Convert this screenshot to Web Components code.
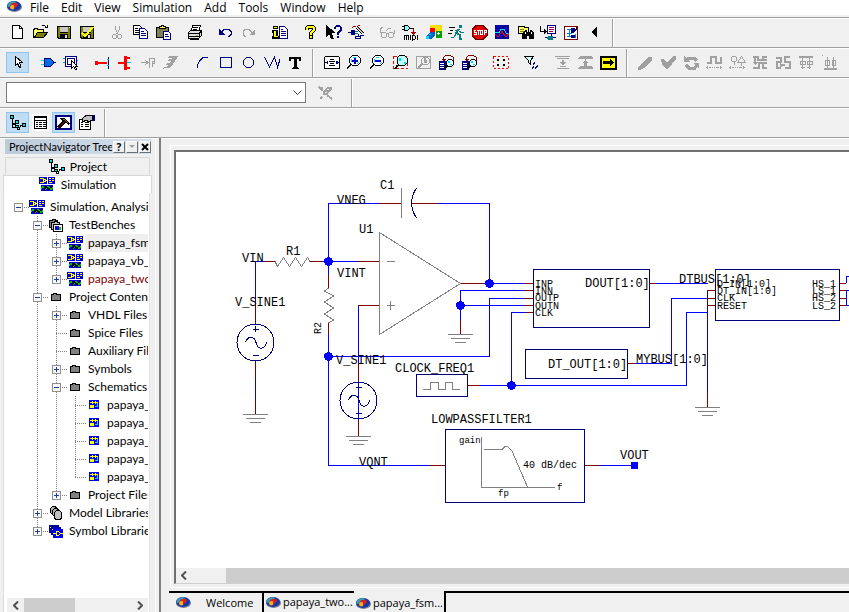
<!DOCTYPE html>
<html lang="en">
<head>
<meta charset="utf-8">
<title>Schematic editor</title>
<style>
  html, body { margin: 0; height: 100%; }
  body { font: 12px/16px Lato, "Open Sans", sans-serif; color: #000; background: #f0f0f0; overflow: hidden;
    --face: #f0f0f0; --shade: #a0a0a0; --light: #fff; --hot: #bfdcf3; --hot-edge: #8fc6f0; }
</style>
</head>
<body>
<app-shell>
  <menu-bar slot="menu">
    <app-icon name="logo"></app-icon>
    <menu-item>File</menu-item><menu-item>Edit</menu-item><menu-item>View</menu-item><menu-item>Simulation</menu-item><menu-item>Add</menu-item><menu-item>Tools</menu-item><menu-item>Window</menu-item><menu-item>Help</menu-item>
  </menu-bar>

  <tool-row slot="tools">
    <tool-bar>
      <tool-button icon="new" label="New"></tool-button><tool-button icon="open" label="Open"></tool-button><tool-button icon="save" label="Save"></tool-button><tool-button icon="savecheck" label="Save and check"></tool-button>
      <tool-gap></tool-gap>
      <tool-button icon="cut" label="Cut"></tool-button><tool-button icon="copy" label="Copy"></tool-button><tool-button icon="paste" label="Paste"></tool-button>
      <tool-gap></tool-gap>
      <tool-button icon="print" label="Print"></tool-button>
      <tool-gap></tool-gap>
      <tool-button icon="undo" label="Undo"></tool-button><tool-button icon="redo" label="Redo"></tool-button>
      <tool-gap></tool-gap>
      <tool-button icon="info" label="Properties"></tool-button>
      <tool-gap></tool-gap>
      <tool-button icon="help" label="Help"></tool-button><tool-button icon="whats" label="Context help"></tool-button><tool-button icon="plug" label="Connect"></tool-button>
      <tool-gap></tool-gap>
      <tool-button icon="glasses" label="Review"></tool-button><tool-button icon="mid" label="Netlist"></tool-button><tool-button icon="blocks" label="Build"></tool-button><tool-button icon="run" label="Run"></tool-button><tool-button icon="stop" label="Stop"></tool-button><tool-button icon="scope" label="Waveforms"></tool-button><tool-button icon="find" label="Find"></tool-button><tool-button icon="import" label="Import"></tool-button><tool-button icon="circuit" label="Circuit"></tool-button><tool-button icon="back" label="Back"></tool-button>
    </tool-bar>
  </tool-row>

  <tool-row slot="tools">
    <tool-bar>
      <tool-button icon="cursor" label="Select" pressed></tool-button>
      <tool-gap></tool-gap>
      <tool-button icon="gate" label="Symbol"></tool-button><tool-button icon="block" label="Block"></tool-button>
      <tool-gap></tool-gap>
      <tool-button icon="wire" label="Wire"></tool-button><tool-button icon="bus" label="Bus"></tool-button><tool-button icon="port" label="Port"></tool-button><tool-button icon="ripper" label="Ripper"></tool-button>
      <tool-gap></tool-gap>
      <tool-button icon="arc" label="Arc"></tool-button><tool-button icon="rect" label="Rectangle"></tool-button><tool-button icon="circle" label="Circle"></tool-button><tool-button icon="poly" label="Polyline"></tool-button><tool-button icon="text" label="Text"></tool-button>
    </tool-bar>
    <tool-bar>
      <tool-button icon="fit" label="Fit"></tool-button><tool-button icon="zoomin" label="Zoom in"></tool-button><tool-button icon="zoomout" label="Zoom out"></tool-button><tool-button icon="zoomarea" label="Zoom area"></tool-button><tool-button icon="zoomsel" label="Zoom selection"></tool-button><tool-button icon="zoomprev" label="Previous zoom"></tool-button><tool-button icon="zoomprev" label="Next zoom"></tool-button>
      <tool-gap></tool-gap>
      <tool-button icon="grid" label="Grid"></tool-button>
      <tool-gap></tool-gap>
      <tool-button icon="filter" label="Filter"></tool-button>
      <tool-gap></tool-gap>
      <tool-button icon="down" label="Push down"></tool-button><tool-button icon="up" label="Pop up"></tool-button><tool-button icon="go" label="Go"></tool-button>
    </tool-bar>
    <tool-bar open>
      <tool-button icon="pen" label="Draw"></tool-button><tool-button icon="check" label="Check"></tool-button><tool-button icon="cycle" label="Update"></tool-button><tool-button icon="move" label="Move net"></tool-button><tool-button icon="shapes" label="Shapes"></tool-button><tool-button icon="nets" label="Nets"></tool-button><tool-button icon="swap" label="Swap"></tool-button><tool-button icon="aligntop" label="Align top"></tool-button><tool-button icon="alignbottom" label="Align bottom"></tool-button><tool-button icon="alignleft" label="Align left"></tool-button>
    </tool-bar>
  </tool-row>

  <tool-row slot="tools">
    <tool-bar wide>
      <combo-box label="Command"></combo-box>
      <tool-button icon="probe" label="Probe"></tool-button>
    </tool-bar>
  </tool-row>

  <tool-row slot="tools">
    <tool-bar>
      <tool-button icon="tree" label="Project tree" pressed></tool-button><tool-button icon="table" label="Table" lit></tool-button><tool-button icon="hammer" label="Build settings" pressed></tool-button><tool-button icon="sheet" label="Sheet properties"></tool-button>
    </tool-bar>
  </tool-row>

  <nav-panel slot="side" heading="ProjectNavigator Tree">
    <panel-tab slot="tabs" icon="tree">Project</panel-tab>
    <panel-tab slot="tabs" icon="sim" current>Simulation</panel-tab>
    <tree-node root icon="sim" label="Simulation, Analysis" box="-">
      <tree-node icon="bench" label="TestBenches" box="-">
        <tree-node icon="sim" label="papaya_fsm" box="+" current></tree-node>
        <tree-node icon="sim" label="papaya_vb_" box="+"></tree-node>
        <tree-node icon="sim" label="papaya_two" box="+" last alert></tree-node>
      </tree-node>
      <tree-node icon="folder" label="Project Contents" box="-">
        <tree-node icon="folder" label="VHDL Files" box="+"></tree-node>
        <tree-node icon="folder" label="Spice Files"></tree-node>
        <tree-node icon="folder" label="Auxiliary Files"></tree-node>
        <tree-node icon="folder" label="Symbols" box="+"></tree-node>
        <tree-node icon="folder" label="Schematics" box="-">
          <tree-node icon="schem" label="papaya_"></tree-node>
          <tree-node icon="schem" label="papaya_"></tree-node>
          <tree-node icon="schem" label="papaya_"></tree-node>
          <tree-node icon="schem" label="papaya_"></tree-node>
          <tree-node icon="schem" label="papaya_" last></tree-node>
        </tree-node>
        <tree-node icon="folder" label="Project Files" box="+" last></tree-node>
      </tree-node>
      <tree-node icon="models" label="Model Libraries" box="+"></tree-node>
      <tree-node icon="symbols" label="Symbol Libraries" box="+" last></tree-node>
    </tree-node>
  </nav-panel>

  <schematic-view slot="main"></schematic-view>
  <doc-tabs slot="tabs">
    <doc-tab wide>Welcome</doc-tab>
    <doc-tab>papaya_two...</doc-tab>
    <doc-tab current>papaya_fsm...</doc-tab>
  </doc-tabs>
</app-shell>

<script>
const K = '#000', B = '#000080', G = '#a0a0a0';
const s = (d, c = K, f = 'none', w = 1) => `<path d="${d}" stroke="${c}" fill="${f}" stroke-width="${w}"/>`;
const f = (d, c = K) => `<path d="${d}" fill="${c}"/>`;
const floppy = f('M2 2h14v13H3l-1-1z') + f('M3 3h2v6h-2zM13 3h2v6h-2zM3 9h12v1H3zM3 10h2v4h-1l-1-1zM13 10h2v4h-2z', '#808000') + f('M5 3h8v5H5z', '#c8c8c8') + f('M10 11h2v3h-2z', '#e0e0e0') + f('M14 3h1v1h-1z', '#fff');
const glass = s('M6.500 1.500h5l3 3v4l-3 3h-5l-3-3v-4z', K, '#fff') + f('M5 5h1v3H5zM7 3h3v1H7zM12 8h1v1h-1zM11 9h1v1h-1z', '#00e0e0') + s('M5 10.500L1 14.500', K, 'none', 2);
const prev = s('M5.500 6V3.500l2-2h5l3 2v3', '#800000') + f('M3 5h5l-2 3z', '#800000') + f('M1 7h7v9H1z', B) + f('M2 9h4v1H2zM2 11h4v1H2zM2 13h4v1H2z', '#fff') + s('M10.500 5.500h3l2 2v3l-2 2h-3l-2-2v-3z', K, '#e8ffff') + f('M10 7h2v2h-2zM12 10h2v1h-2z', '#00e0e0') + s('M9 12L6 15', K, 'none', 2);
const arrows = f('M2 11l-2 2.500 2 2.500zM14 11l2 2.500-2 2.500zM3 13h2v1H3zM6 13h1v1H6zM8 13h1v1H8zM10 13h3v1h-3z', G);
const ICONS = {
  new: s('M3.500 1.500h7l3 3v10h-10z', K, '#fff') + s('M10.500 1.500v3h3'),
  open: f('M1 5h1V4h4v1h6v4H6l-4 5H1z', '#ffff66') + s('M1.500 14v-8.500h1v-1h3v1h6v3') + s('M2.500 13.500l3-5h10l-4 5z', '#000', '#808000') + s('M9.500 2.500l1-1h2l2 2') + f('M13 4h3V1h-1v2h-2z'),
  save: floppy,
  savecheck: floppy + s('M4 9l3 3 8-9', '#ffff00', 'none', 2),
  cut: s('M6.500 1.500v4l3 5M10.500 1.500v4l-3 5', G) + s('M4.500 10.500h2l1 1v2l-1 1h-2l-1-1v-2zM9.500 10.500h2l1 1v2l-1 1h-2l-1-1v-2z', G),
  copy: s('M1.500 1.500h6l2 2v7h-8z', K, '#fff') + s('M3 4.500h3M3 6.500h4M3 8.500h4') + s('M7.500 4.500h5l3 3v7h-8z', B, '#fff') + s('M9 7.500h3M9 9.500h5M9 11.500h5', B),
  paste: s('M1.500 3.500h12v10h-12z', K, '#808050') + s('M4.500 4.500v-2h2v-1h2v1h2v2z', K, '#ffff66') + s('M8.500 7.500h5l2 2v6h-7z', B, '#fff') + s('M10 10.500h3M10 12.500h4', B),
  print: s('M5.500 7.500l1-6h8l-2 6z', K, '#fff') + s('M7 3.500h5M7 5.500h4') + s('M2.500 8.500l2-2h11v5l-3 3h-10z', K, '#e0e0e0') + s('M2 9.500h11l3-3M2 12.500h11v-3') + f('M10 11h2v1h-2z', '#c0b000') + s('M4 14.500h9', K, 'none', 2),
  undo: s('M4 8.500l3-3h5l2 2v3l-2 2h-1', B) + f('M2 5v6h6z', B),
  redo: s('M12 8.500l-3-3H5l-2 2v3l2 2h1', G) + f('M15 5v6H9z', G),
  info: f('M2 2h5v3H2zM1 6h6v6h1v3H1v-3h1V9H1z') + f('M3 3h3v1H3zM3 7h2v5h2v1H3z', '#ffff00') + s('M8.500 2.500h5l3 3v9h-8z', B, '#fff') + s('M10 5.500h2M10 7.500h5M10 9.500h5M10 11.500h5', B),
  help: s('M5 5.500V4L7 2.500h3L12 4v2L9 9v2', K, 'none', 4) + s('M5 5.500V4L7 2.500h3L12 4v2L9 9v2', '#ffff00', 'none', 2) + f('M7 11h4v4H7z') + f('M8 12h2v2H8z', '#ffff00'),
  whats: f('M1 1v12l3-3 2 5h3L7 9h4z') + s('M10 5V3.500L11.500 2h3L16 3.500v3L13 9v1.500', B, 'none', 2) + f('M12 12h2v2h-2z', B),
  plug: f('M3 6h4v5H3zM0 8h3v1H0z', B) + f('M7 7h3v1H7zM7 9h3v1H7z', '#008080') + s('M9 2l7 7M8 4l6 6', K, 'none', 1) + s('M9 3l6 6', '#c08080') + s('M12 11.500h4M7.500 14.500h5v-2h-5zM10 10v2', B) + s('M3.500 4.500l2-2h2M10 1l2 1', '#a00'),
  glasses: s('M1.500 5l2-2M7.500 7l2-3h2M3.500 8.500h3l1 1v3l-1 1h-3l-1-1v-3zM10.500 8.500h3l1 1v3l-1 1h-3l-1-1v-3zM7 9.500h3M1.500 4v4l1 1M15.500 6v4', G),
  mid: f('M2 1h6v6H5L2 6z', '#fff') + s('M2.500 1.500h3l2 2v1l-2 2h-3zM0 2.500h2M0 5.500h2M8 4.500h3.500', K, '#80ffff') + s('M11.500 5v3', '#a00') + f('M9 8h5l-2.500 3z', '#a00') + s('M2.500 16v-4.500h4V16M4.500 12v4M8.500 11v5M10.500 16v-4.500h2l1 1v2l-1 1zM15.500 16v-5'),
  blocks: f('M5 1h6v7H5z', '#ffff00') + f('M5 1h6v3H5z', '#ffe000') + f('M11 1h6v6h-6z', '#ffe000') + f('M5 4h5v4H5z', '#f00') + f('M11 7h6v7h-6z', '#00a000') + f('M12 9h3v1h-3zM13 8h1v3h-1z', '#fff') + f('M5 8h5v3l-4 4H3l-2-2z', '#0060d0') + f('M1 12h3v3H1zM4 10h2v1H4z', '#00e0e0'),
  run: f('M11 1h3v3h-3z', '#008080') + s('M11 5L8 9l4 2v4h2', '#008080', 'none', 2) + s('M8 10l-2 3H3M7 6h3l3 2.500h3', '#008080') + s('M1 3.500h6M2 6.500h3M0 9.500h4'),
  stop: f('M5 1h7l4 4v6l-4 5H5l-4-5V5z', '#e00000') + s('M5 1.500h7l4 4v6l-4 4H5l-4-4v-6z', '#600') + s('M5 6.500H3.500v2H5v2H3M6 6.500h3M7.500 7v4M9.500 6.500h2v4h-2zM13.500 11V6.500h2v2h-2', '#fff'),
  scope: f('M1 1h14v14H1z', '#000090') + s('M3.500 1v14M7.500 1v14M12.500 1v14M1 5.500h14M1 11.500h14', '#0000e0') + s('M1 8.500h4L7 5h3l2 4h3', '#00e0e0') + s('M1 10l2 2h2l3-5 3 5h2l2-3', '#f00'),
  find: f('M1 2h6l1 1h4v7H1z', '#000') + f('M2 3h4l1 1h4v5H2z', '#ffff66') + s('M3 5.500h4M3 7.500h4', '#808000') + f('M6 8l2-2h2v2h3V6h2l2 3v6h-5v-3h-2v3H5v-4z') + f('M8 8h1v2H8zM14 8h1v2h-1z', '#fff'),
  import: s('M0 4v3.500h5') + f('M4 5l3 2.500L4 10zM0 2h1v2H0z') + s('M7.500 1.500h8v8h-8z', B, '#fff') + s('M9 3.500h5M9 5.500h5M9 7.500h4', '#a00060') + f('M8 12h5v4H8l-2-2z', '#008080') + s('M13 13.500h3M11.500 9v3M5 13.500h2', B),
  circuit: s('M1.500 2.500h13v13h-13z', '#800000', '#fff') + s('M4 5.500h5M4 9.500h5M4 12.500h8M6.500 5v8M12.500 10v4', '#0080d0') + f('M8 4h3l2 2-2 3H8z', B) + f('M11 5h3v1h-3zM8 11h4v3H8z', B) + f('M13 3h1v3h-1z'),
  back: f('M11 2v12L5 8z'),
  cursor: s('M6.500 2.500v9l2-2 2 4h1v-2l-1-3h3z', K, '#fff'),
  gate: f('M4 4h7l3 4-3 5H4z', '#0060d0') + s('M4.500 4.500h6l3 3v2l-3 3h-6zM13 8.500h3', B, '#0070e0') + s('M1 6.500h3M1 10.500h3', '#00e0e0'),
  block: s('M2.500 2.500h11v10h-11z', B, '#fff') + s('M4.500 4.500h7v6h-7z', B, '#fff') + s('M0 4.500h2M0 8.500h2M14 6.500h1', '#00a0e0') + s('M8.500 6.500v8l2-2 2 3h1l-1-3h2z', K, '#fff'),
  wire: s('M3 9h10', '#f00', 'none', 2) + f('M1 7h3v4H1z', '#f00') + s('M14.500 3v12', B) + s('M13 5.500h2M13 11.500h2', '#00c0e0'),
  bus: s('M8 2v14', '#f00', 'none', 3) + s('M1 9h6M8 4h5M8 14h5', '#f00', 'none', 2) + s('M10 8.500h4', '#00c0e0'),
  port: s('M1 8.500h7M9.500 14V4.500h5v3M12.500 13V7.500h2v2h-2M5 6l3 2.500-3 2.500', G),
  ripper: f('M6 2h9l-2 2h1l-3 3h1l-3 3h1l-4 4h-4l-2 1 1-2h3l1-2H2l3-2h2l1-2H4l3-2h1l1-1H5z', G),
  arc: s('M3.500 14v-3l2-4 3-3 5-1', B),
  rect: s('M3.500 3.500h11v10h-11z', B),
  circle: s('M6.500 3.500h4l3 3v4l-3 3h-4l-3-3v-4z', B),
  poly: s('M1.500 3l5 10 5-10M9.500 7l2-4 3 10 3-9', B),
  text: f('M3 3h12v4h-1.500l-1-2H10.500v8l2 1v1h-7v-1l2-1V5H5.500l-1 2H3z'),
  fit: s('M2.500 2.500h13l1 1v11h-15v-11z', K, '#fff') + f('M2 8.500l3-2v4zM16 8.500l-3-2v4z', B) + s('M7 5.500h4M6 7.500h6M7 9.500h4M6 11.500h6'),
  zoomin: glass + s('M6 7h6M9 4v6', '#00c', 'none', 2),
  zoomout: glass + s('M6 7h6', '#00c', 'none', 2),
  zoomarea: '<path d="M1.500 2.500h14v12h-14z" stroke="#f00" fill="none" stroke-dasharray="3 2"/>' + s('M7.500 1.500h5l3 3v4l-3 3h-5l-2-2v-6z', K, '#c0ffff') + f('M7 4h2v3H7zM12 8h2v2h-2z', '#00e0e0') + s('M6 11l-3 4', K, 'none', 2),
  zoomsel: s('M1.500 2.500h14v12h-14z', G) + s('M8.500 3.500h4l2 2v3l-2 2h-4l-2-2v-3z', G) + s('M7 10l-4 4M9 6l3 2M10 4v5', G, 'none', 2),
  zoomprev: prev,
  grid: '<path d="M1.500 2.500h15v12h-15z" stroke="#f00" fill="none" stroke-dasharray="2 2"/>' + f('M5 5h2v2H5zM11 5h2v2h-2zM5 10h2v2H5zM11 10h2v2h-2z'),
  filter: s('M1.500 2.500h9l-3 4v4l-2-2v-2z', K, '#d0ffff') + s('M9 14.500l2-2M12 14.500l3-3M10 10.500l2-2', B),
  down: f('M1 2h15v1H1zM2 4h13l-1 1H3zM8 6h2v3H8zM5 8h7l-3 4zM6 12h6v1H6zM3 14h12v1H3z', G),
  up: f('M3 2h11l2 2v1H1V4zM8 5h1v3H8zM5 9l3.500-3L12 9zM7 9h3v3H7zM3 12h11l2 2v1H1v-1z', G),
  go: s('M.500 2.500h15v12H.500z', K, '#ffff00', 2) + f('M3 7h7V4l4 4.500L10 13v-3H3z'),
  pen: f('M11 3h4v3l-8 8-4 2H1v-3z', G),
  check: f('M1 5h3l3 4 6-7h3v3l-8 10H6L2 11z', G),
  cycle: s('M3 7l2-3h6l3 3M14 10l-2 4H6l-3-3', G, 'none', 3) + f('M1 2v6h6zM16 15V9h-6z', G),
  move: s('M1 9h4V3h5v6h5V3', G, 'none', 2) + arrows,
  shapes: s('M3.500 2.500h3l1 1v3l-1 1h-3l-1-1v-3zM5 8v3M8.500 8.500l4-6 4 6zM12 9v3', G) + arrows,
  nets: s('M1 3h5v3h9M15 3h-4v3M3 3v6M15 9h-4v5h4M1 14h6V9h3', G, 'none', 2) + f('M1 8h5l-2.500 3z', G),
  swap: s('M1 4h5v4H2v6h4M15 3h-5v5h5v6h-5M7 11h3', G, 'none', 2) + f('M5 9l3 2.500-3 2.500z', G),
  aligntop: f('M1 2h14v2H1zM4 4h1v11H4zM11 4h1v11h-1z', G) + s('M2 7h5v3H2zM9 7h5v3H9zM3 13h4M9 13h4', G, 'none', 1),
  alignbottom: f('M3 14h13v2H3zM6 3h1v11H6zM12 3h1v11h-1zM1 1h1v1H1z', G) + s('M4 6.500h4v5H4zM11 6.500h3v5h-3z', G, 'none', 1),
  alignleft: f('M5 3h1v12H5zM8 4h8v3H8z', G),
  probe: s('M2 3l4 4M10 11l5 4M3 15l2-2', G, 'none', 2) + f('M6 8l4-5h5v3l-6 5H6zM2 3h4v2H2z', G) + f('M10 5h2v1h-2zM8 8h2v1H8z', '#f0f0f0'),
  tree: s('M3.500 5v8.500h3M3.500 6.500v4h3M3 9.500h3M8.500 12v3.500h2l1-4h2', K) + s('M1.500 1.500h3v3h-3zM6.500 6.500h3v3h-3zM6.500 11.500h3v2h-3zM13.500 9.500h3v3h-3z', K, '#00e0e0'),
  table: s('M2.500 2.500h12v12h-12z', K, '#fff') + s('M2 3h13', K, 'none', 2) + s('M2 6.500h13M4 8.500h2M7 8.500h3M11 8.500h3M4 10.500h2M7 10.500h3M11 10.500h3M4 12.500h2M7 12.500h3M11 12.500h3'),
  hammer: s('M1 2h15v13H1z', B, '#fff', 2) + s('M3 14L10 7', '#000', 'none', 3) + s('M3 14L10 7', '#900', 'none', 1) + f('M5 4h4l2 1 4 5-2 1-3-4-2 1-2-2z', '#000') + f('M7 5h3l3 4h-1L9 6z', '#808000'),
  sheet: s('M1.500 5.500h11v10h-11z', K, '#fff') + s('M3 8.500h2M7 8.500h4M3 10.500h2M7 10.500h4M3 12.500h2M7 12.500h4') + f('M14 1h3v6h-3z', B) + s('M4 5l4-3.500h6v5l-3 1-3-1-3 1z', K, '#c0c0c0'),
  sim: f('M0 0h17v16H0z', '#fff') + f('M0 1h8v7H0zM9 1h7v7H9zM2 9h12v6H2z', '#0000e0') + s('M1 2.500h3v4H1M4 3.500h2v2H4M6 4.500h2M10 2.500h2M13 2.500h2M10 4.500h2M13 4.500h2M10 6.500h3', '#ff0') + s('M2 12.500l2-2 2 3 3-3 3 3 2-2', '#00c000') + s('M5 14.500l2-4 3 3 3-4', K),
  bench: s('M1.500 3.500h3v-1h3v1h2v7h-8z', K, '#808080') + s('M3.500 5.500h3v-1h3v1h2v7h-8z', K, '#c0c0c0') + s('M5.500 7.500h9v7h-9z', K, '#fff') + f('M7 9h4v4H7z', '#00f') + f('M11 10h2v3h-2z', '#00c000') + f('M9 9h1v1H9z', '#f00'),
  folder: s('M3.500 5.500h2v-1h3v1h4v6h-9z', K, '#808080'),
  schem: f('M3 3h10v9H3z', '#0000f0') + s('M4 5.500h8M6.500 4v3M9.500 4v3', '#ff0') + f('M4 8h4v3H4z', '#ffff00') + s('M9 9.500h2.500V6', '#00e0e0'),
  models: s('M2.500 3.500l2-2h3l1 2v6h-4l-2-2z', K, '#b0b0b0') + s('M4.500 5.500l2-2h3l1 2v6h-4l-2-2z', K, '#b0b0b0') + s('M6.500 7.500l2-2h3l2 2v6l-2 1h-3l-2-1z', K, '#c0c0c0'),
  symbols: f('M1 2h10v8H1z', B) + f('M3 4h10v8H3z', '#0000c0') + f('M5 6h10v9H5z', '#0000ff') + s('M5 10.500h3M8.500 8.500h2l2 2-2 2h-2zM13 10.500h2M2 4.500h1M4 6.500h1', '#ff0'),
  logo: '<g shape-rendering="auto"><ellipse cx="8.500" cy="9" rx="7.500" ry="5" fill="#808090"/><ellipse cx="8" cy="8" rx="7" ry="5" fill="#1438a8"/><path d="M1.500 9C1 4.500 6 2.500 10 3.500L8 8z" fill="#35a0b0"/><path d="M4 8c1-3 4-4 7-3l1 2-4 4c-2 0-4-1-4-3z" fill="#d82020"/><path d="M4 9.500c0-2 2-3 4-2v3.500c-2 1-4 0-4-1.500z" fill="#f0b020"/></g>'
};
const svg = n => `<svg viewBox="0 0 17 17" width="17" height="17" shape-rendering="crispEdges" aria-hidden="true">${ICONS[n] || ''}</svg>`;

function define(name, build) {
  customElements.define(name, class extends HTMLElement {
    constructor() { super(); this.attachShadow({ mode: 'open' }); }
    connectedCallback() { this.shadowRoot.innerHTML = build(this); }
  });
}

define('app-shell', () => `<style>
  :host { display: flex; flex-direction: column; height: 100vh; overflow: hidden; }
  .body { display: flex; flex: 1; min-height: 0; border-top: 1px solid var(--shade); box-shadow: inset 0 1px var(--light); }
  .main { flex: 1; min-width: 0; display: flex; flex-direction: column; }
  .split { width: 3px; border-left: 1px solid var(--light); border-right: 2px solid #808080; }
</style><slot name="menu"></slot><slot name="tools"></slot>
<div class="body"><slot name="side"></slot><div class="split"></div><div class="main"><slot name="main"></slot><slot name="tabs"></slot></div></div>`);

define('app-icon', e => `<style>:host { display: block; height: 17px; width: 17px; } svg { display: block; }</style>${svg(e.getAttribute('name'))}`);

define('menu-bar', () => `<style>
  :host { display: flex; height: 15px; padding-left: 6px; background: #fff; margin-bottom: 2px; font-family: "Open Sans", sans-serif; }
  ::slotted(app-icon) { margin: -2px 1px 0 0; }
</style><slot></slot>`);
define('menu-item', () => `<style>
  :host { display: block; }
  button { all: unset; display: block; padding: 0 6px; line-height: 15px; }
</style><button type="button"><slot></slot></button>`);

define('tool-row', () => `<style>
  :host { display: flex; height: 28px; border-top: 1px solid var(--shade); box-shadow: inset 0 1px var(--light); padding-top: 1px; overflow: hidden; flex: none; }
</style><slot></slot>`);
define('tool-bar', () => `<style>
  :host { display: flex; flex: none; align-items: flex-start; padding: 3px 6px 0; border-right: 1px solid var(--shade); box-shadow: 1px 0 var(--light); margin-right: 1px; }
  :host([wide]) { gap: 8px; padding-right: 14px; }
  :host([open]) { border: 0; box-shadow: none; }
</style><slot></slot>`);
define('tool-gap', () => `<style>:host { display: block; width: 8px; }</style>`);
define('tool-button', e => `<style>
  :host { display: block; }
  button { all: unset; box-sizing: border-box; display: grid; place-items: center; width: 23px; height: 21px; }
  :host([pressed]) button { background: var(--hot); box-shadow: inset 0 0 0 1px var(--hot-edge); }
  :host([lit]) svg { background: #fff; }
  svg { display: block; }
</style><button type="button" aria-label="${e.getAttribute('label')}">${svg(e.getAttribute('icon'))}</button>`);
define('combo-box', e => `<style>
  :host { display: grid; width: 300px; }
  select, svg { grid-area: 1 / 1; }
  select { appearance: none; font: inherit; height: 21px; border: 1px solid #7a7a7a; border-radius: 0; background: #fff; margin: 0; padding: 0 20px 0 4px; }
  svg { justify-self: end; align-self: center; margin-right: 4px; pointer-events: none; }
</style><select aria-label="${e.getAttribute('label')}"></select><svg width="9" height="6"><path d="M.5.5l4 4 4-4" fill="none" stroke="#444"/></svg>`);

const arrow = d => `<svg width="6" height="9"><path d="${d}" fill="none" stroke="#505050" stroke-width="2"/></svg>`;
const LEFT = arrow('M5 .5l-4 4 4 4'), RIGHT = arrow('M1 .5l4 4-4 4');

define('nav-panel', e => `<style>
  :host { display: flex; flex-direction: column; width: 149px; flex: none; padding: 1px 3px 0; }
  header { display: flex; align-items: center; gap: 1px; height: 15px; margin: 0 1px 0 2px; background: linear-gradient(90deg, #bccbda, #d3e0ee); }
  header span { flex: 1; overflow: hidden; white-space: nowrap; padding-left: 4px; font-size: 11px; line-height: 15px; }
  header button { all: unset; box-sizing: border-box; display: grid; place-items: center; width: 12px; height: 12px; background: #f0f0f0; border: 1px solid; border-color: #fff #707070 #707070 #fff; font: bold 10px/10px "Open Sans", sans-serif; }
  .tabs { margin-top: 3px; }
  .tree { flex: 1; min-height: 0; background: #fff; border-left: 1px solid #dcdcdc; border-right: 1px solid #e4e4e4; margin-right: 2px; padding: 5px 1px 0 5px; display: flex; flex-direction: column; overflow: hidden; }
  .nodes { flex: 1; overflow: hidden; min-height: 0; }
  .bar { display: flex; align-items: center; height: 14px; background: #f0f0f0; margin-left: -2px; }
  .bar button { all: unset; width: 17px; display: grid; place-items: center; }
  .bar i { width: 51px; height: 14px; background: #cdcdcd; }
  .bar button:last-child { margin-left: auto; }
</style>
<header><span>${e.getAttribute('heading')}</span><button type="button" aria-label="Help">?</button><button type="button" aria-label="Menu"><svg width="6" height="4"><path d="M0 0h6l-3 3z" fill="#a0a0a0"/></svg></button><button type="button" aria-label="Close"><svg width="8" height="8"><path d="M1 1l6 6M7 1L1 7" stroke="#000" stroke-width="2"/></svg></button></header>
<div class="tabs" role="tablist"><slot name="tabs"></slot></div>
<div class="tree"><div class="nodes" role="tree"><slot></slot></div>
<div class="bar"><button type="button" aria-label="Scroll left">${LEFT}</button><i></i><button type="button" aria-label="Scroll right">${RIGHT}</button></div></div>`);

define('panel-tab', e => `<style>
  :host { display: block; }
  button { all: unset; box-sizing: border-box; display: flex; gap: 5px; justify-content: center; align-items: center; height: 18px; margin: 0 2px; width: calc(100% - 4px); border: 1px solid #d8d8d8; border-bottom: 0; }
  :host([current]) button { background: #fff; margin: 0; width: 100%; }
  svg { display: block; }
</style><button type="button" role="tab">${svg(e.getAttribute('icon'))}<span><slot></slot></span></button>`);

define('tree-node', e => {
  const box = e.getAttribute('box');
  return `<style>
  :host { display: block; --dots: repeating-linear-gradient(180deg, #808080 0 1px, transparent 1px 2px); background: var(--dots) 9px 0 / 1px 100% no-repeat; }
  :host([last]) { background-size: 1px 9px; }
  :host([root]) { background: none; }
  .row { display: flex; height: 18px; align-items: center; background: repeating-linear-gradient(90deg, #808080 0 1px, transparent 1px 2px) 9px 9px / 11px 1px no-repeat; }
  .cell { width: 19px; flex: none; display: grid; place-items: center; }
  .cell svg { display: block; }
  .icon { width: 19px; flex: none; display: block; }
  .icon svg { display: block; margin-left: 1px; }
  .label { padding: 0 2px 0 3px; white-space: nowrap; line-height: 18px; }
  :host([current]) .label { background: #f0f0f0; }
  :host([alert]) .label { color: #800000; }
  .kids { margin-left: 19px; }
</style><div class="row" role="treeitem"><span class="cell">${box ? `<svg width="9" height="9" shape-rendering="crispEdges"><path d="M.5.5h8v8h-8z" fill="#f8f8f8" stroke="#909090"/><path d="M2 4.500h5${box === '+' ? 'M4.500 2v5' : ''}" stroke="#2040a0"/></svg>` : ''}</span><span class="icon">${svg(e.getAttribute('icon'))}</span><span class="label">${e.getAttribute('label')}</span></div>
<div class="kids" role="group"><slot></slot></div>`;
});

const wire = (c, d) => `<path d="${d}" stroke="${c}"/>`;
const node = (x, y) => `<circle cx="${x}.5" cy="${y}.5" r="4.500" fill="#00f" stroke="none"/>`;
const ground = (x, y) => `M${x - 12} ${y}.5h25M${x - 9} ${y + 4}.5h19M${x - 5} ${y + 8}.5h11`;
const t = (x, y, s, c = '') => `<text x="${x}" y="${y}" class="${c}">${s}</text>`;
const source = (x, y) => `M${x - 18} ${y}.5a18.500 18.500 0 1 0 37 0a18.500 18.500 0 1 0-37 0M${x - 2} ${y - 13}.5h6M${x}.5 ${y - 16}v6M${x - 2} ${y + 13}.5h6M${x - 10}.5 ${y}.5c2-6 8-8 10.500 0c2 8 8 7 11 0`;

define('schematic-view', () => `<style>
  :host { display: flex; flex-direction: column; flex: 1; min-height: 0; margin: 7px 0 3px 9px; border: 1px solid #fff; border-right: 0; padding: 4px 0 3px 3px; }
  .frame { flex: 1; min-height: 0; display: flex; flex-direction: column; border: 2px solid #707070; border-right: 0; border-bottom: 1px solid #d0d0d0; background: #fff; }
  .canvas { flex: 1; min-height: 0; overflow: hidden; }
  svg.plan { display: block; }
  text { font-family: "Liberation Mono", monospace; font-size: 12px; fill: #000; stroke: none; }
  text.pin { font-size: 10px; }
  text.note { font-size: 10px; }
  text.tiny { font-size: 9px; }
  .bar { display: flex; height: 15px; flex: none; background: #f0f0f0; }
  .bar button { all: unset; width: 16px; display: grid; place-items: center; margin-right: 34px; }
  .bar i { flex: 1; background: #cdcdcd; }
</style>
<div class="frame"><div class="canvas"><svg class="plan" width="673" height="416" viewBox="176 152 673 416" fill="none" shape-rendering="crispEdges" role="img" aria-label="Schematic">
${wire('#00f', 'M328.5 261V203.5H379M438 203.5H489.500V283M255.500 305V261.500H265M322 261.500H358M358.500 363V305.500M328.500 261V275M328.500 334V465.500H430M328 356.500H489.500V298.500H525M255.500 379V399M483 283.500H525M525 290.500H460.500V320M460 305.500H525M526 312.500H511.500V385M480 385.500H686.500V312.500H707M656 283.500H708M707.500 290V393M635 363.500H671.500V298.500H707M599 465.500H632M358.500 382V419M849 276.500H846.500V283M846 290.500H849M846.500 290V305.500H849')}
${wire('#800000', 'M379 203.500H401M412 203.500H438M265 261.500H275M310 261.500H322M358 261.500H379M358 305.500H379M255.500 305V324M255.500 361V379M255.500 399V414M328.500 275V288M328.500 323V334M358.500 363V382M358.500 419V436M460 283.500H483M525 283.500H533M525 290.500H533M525 298.500H533M525 305.500H533M526 312.500H533M460.500 320V334M430 465.500H445M467 385.500H480M627 363.500H635M649 283.500H656M707 290.500H715M707 298.500H715M707 305.500H715M707.500 393V407M584 465.500H599M839 283.500H846M839 290.500H846M839 298.500H846M839 305.500H846')}
${wire('#808080', 'M401.500 188V218M275 261.500L277.500 266.500L283.500 257.500L289.500 266.500L295.500 257.500L301.500 266.500L307.500 257.500L310 261.500M328.500 288L324.500 291L333.500 296L324.500 302L333.500 308L324.500 314L333.500 320L328.500 323M379.500 232.500L460.500 283.500L379.500 334.500ZM387 261.500H395M387 305.500H395M390.500 301V310M423 389.500H430.500V382.500H438.500V389.500H445.500V382.500H452.500V389.500H460M481.500 437V487.500H555M484 449.500H502L505 446.500L508 447L512 451L527.500 487' + ground(255, 414) + ground(358, 436) + ground(460, 334) + ground(707, 407))}
${wire('#000080', 'M416.500 188C410 198 410 208 416.500 218M533.500 269.500H649.500V327.500H533.500ZM715.500 269.500H839.500V320.500H715.500ZM525.500 349.500H627.500V378.500H525.500ZM416.500 374.500H467.500V396.500H416.500ZM445.500 429.500H584.500V502.500H445.500Z' + source(255, 342) + source(358, 400))}
${node(328, 261)}${node(328, 356)}${node(489, 283)}${node(460, 305)}${node(511, 385)}
<rect x="631" y="462" width="7" height="7" fill="#00f"/>
${t(380, 189, 'C1')}${t(337, 204, 'VNEG')}${t(359, 233, 'U1')}${t(286, 255, 'R1')}${t(242, 262, 'VIN')}${t(337, 277, 'VINT')}${t(235, 306, 'V_SINE1')}${t(336, 364, 'V_SINE1')}
<text transform="translate(321 334) rotate(-90)" class="pin">R2</text>
${t(395, 372, 'CLOCK_FREQ1')}${t(431, 423, 'LOWPASSFILTER1')}${t(359, 466, 'VQNT')}${t(620, 459, 'VOUT')}
${t(535, 287, 'INP', 'pin')}${t(535, 294, 'INN', 'pin')}${t(535, 301, 'OUTP', 'pin')}${t(535, 309, 'OUTN', 'pin')}${t(535, 316, 'CLK', 'pin')}
${t(585, 287, 'DOUT[1:0]')}${t(548, 368, 'DT_OUT[1:0]')}${t(636, 363, 'MYBUS[1:0]')}${t(679, 283, 'DTBUS[1:0]')}
${t(717, 287, 'D_IN[1:0]', 'pin')}${t(717, 294, 'DT_IN[1:0]', 'pin')}${t(717, 301, 'CLK', 'pin')}${t(717, 309, 'RESET', 'pin')}
${t(812, 287, 'HS_1', 'pin')}${t(812, 294, 'LS_1', 'pin')}${t(812, 301, 'HS_2', 'pin')}${t(812, 309, 'LS_2', 'pin')}
${t(459, 443, 'gain', 'tiny')}${t(523, 468, '40 dB/dec', 'note')}${t(498, 496, 'fp', 'tiny')}${t(557, 490, 'f', 'tiny')}
</svg></div>
<div class="bar"><button type="button" aria-label="Scroll left">${LEFT}</button><i></i></div></div>`);

define('doc-tabs', () => `<style>
  :host { display: flex; flex: none; height: 21px; margin-left: 8px; overflow: hidden; font-family: "Open Sans", sans-serif; }
  :host::before { content: ""; width: 5px; border-top: 2px solid #000; }
  :host::after { content: ""; flex: 1; border-top: 2px solid #000; border-left: 2px solid #000; }
</style><slot></slot>`);
define('doc-tab', () => `<style>
  :host { display: block; }
  button { all: unset; box-sizing: border-box; display: flex; align-items: center; gap: 1px; height: 20px; width: 90px; border-top: 2px solid #000; padding-left: 1px; font-size: 11px; }
  :host([wide]) button { border-right: 2px solid #000; gap: 14px; height: 21px; }
  :host([current]) button { border-top-color: transparent; height: 21px; padding-top: 1px; }
  svg { display: block; }
</style><button type="button" role="tab">${svg('logo')}<span><slot></slot></span></button>`);
</script>
</body>
</html>
